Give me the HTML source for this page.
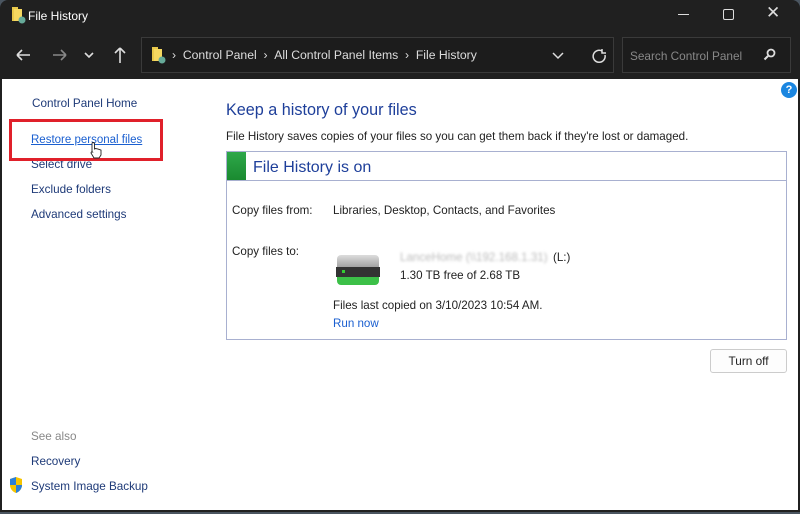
<!DOCTYPE html>
<html><head><style>
*{margin:0;padding:0;box-sizing:border-box}
body{width:800px;height:514px;background:#4a5560;font-family:"Liberation Sans",sans-serif;position:relative;overflow:hidden}
.win{position:absolute;left:0;top:0;width:800px;height:512px;background:#202020;border-radius:8px 8px 0 0;overflow:hidden}
.t{position:absolute;white-space:nowrap}
.content{position:absolute;left:2px;top:79px;width:796px;height:431px;background:#fff}
.lk{color:#1e3a78;font-size:11.7px}
.blk{color:#222;font-size:11.6px}
</style></head><body>
<div class="win">
<svg class="t" style="left:10px;top:6px" width="16" height="18"><path d="M2 1h6v14H2z" fill="#e8c84a"/><path d="M4 3h8v12H4z" fill="#f5d860"/><circle cx="12" cy="14" r="3.5" fill="#6a9"/></svg>
<div class="t" style="left:28px;top:9px;color:#fff;font-size:12px">File History</div>
<div class="t" style="left:678px;top:14px;width:11px;height:1px;background:#ddd"></div>
<div class="t" style="left:723px;top:9px;width:11px;height:11px;border:1.3px solid #ddd;border-radius:2px"></div>
<div class="t" style="left:766px;top:3px;color:#ddd;font-size:17px">✕</div>
<svg class="t" style="left:12px;top:45px" width="120" height="20" stroke="#ddd" stroke-width="1.6" fill="none"><path d="M5 10h13M5 10l5-5M5 10l5 5"/><path d="M41 10h13M54 10l-5-5M54 10l-5 5" stroke="#888"/><path d="M73 8l4 4 4-4"/><path d="M108 3v15M108 3l-5 5M108 3l5 5"/></svg>
<div class="t" style="left:141px;top:37px;width:473px;height:36px;border:1px solid #3a3a3a;background:#1c1c1c"></div>
<svg class="t" style="left:150px;top:46px" width="16" height="18"><path d="M2 1h6v14H2z" fill="#e8c84a"/><path d="M4 3h8v12H4z" fill="#f5d860"/><circle cx="12" cy="14" r="3.5" fill="#6a9"/></svg>
<div class="t" style="left:172px;top:48px;color:#ddd;font-size:12.2px">›&nbsp;&nbsp;Control Panel&nbsp;&nbsp;›&nbsp;&nbsp;All Control Panel Items&nbsp;&nbsp;›&nbsp;&nbsp;File History</div>
<svg class="t" style="left:550px;top:48px" width="60" height="16" stroke="#ddd" stroke-width="1.5" fill="none"><path d="M3 5l5 5 5-5"/><path d="M52 3a6 6 0 1 0 3 4M52 1v4h4"/></svg>
<div class="t" style="left:622px;top:37px;width:169px;height:36px;border:1px solid #3a3a3a;background:#1c1c1c"></div>
<div class="t" style="left:630px;top:49px;color:#888;font-size:11.8px">Search Control Panel</div>
<svg class="t" style="left:762px;top:46px" width="16" height="16"><circle cx="9" cy="7" r="3.5" stroke="#ddd" stroke-width="1.8" fill="none"/><path d="M6 10l-3.5 3.5" stroke="#ddd" stroke-width="2"/></svg>
<div class="content">
<div class="t" style="left:779px;top:3px;width:16px;height:16px;border-radius:50%;background:#1b86e0;color:#fff;font-size:11px;text-align:center;line-height:16px;font-weight:bold">?</div>
<div class="t lk" style="left:30px;top:18px">Control Panel Home</div>
<div class="t" style="left:29px;top:55px;font-size:11.5px;color:#1a5fd0;text-decoration:underline">Restore personal files</div>
<div class="t lk" style="left:29px;top:79px">Select drive</div>
<div class="t" style="left:7px;top:40px;width:154px;height:42px;border:3px solid #e0202a"></div>
<svg class="t" style="left:87px;top:62px" width="16" height="18"><path d="M4 1.5c1 0 1.5.5 1.5 1.5v5l1-.5 1.5.3 1 .3 1.5.5 1.5.5V14l-2 3H5l-3-5c0-1 1-1.5 1.5-1L3 11V3c0-1 0-1.5 1-1.5z" fill="#fff" stroke="#222" stroke-width="0.9"/></svg>
<div class="t lk" style="left:29px;top:104px">Exclude folders</div>
<div class="t lk" style="left:29px;top:129px">Advanced settings</div>
<div class="t" style="left:29px;top:351px;color:#888;font-size:11.7px">See also</div>
<div class="t lk" style="left:29px;top:376px">Recovery</div>
<svg class="t" style="left:6px;top:397px" width="16" height="18"><path d="M8 1l6 2v6c0 4-3 7-6 8-3-1-6-4-6-8V3z" fill="#f5c400"/><path d="M8 1v8H2V3zM8 9h6c0 4-3 7-6 8z" fill="#2a7fd8"/></svg>
<div class="t lk" style="left:29px;top:401px">System Image Backup</div>
<div class="t" style="left:224px;top:22px;color:#1e3f9a;font-size:16.2px">Keep a history of your files</div>
<div class="t blk" style="left:224px;top:51px">File History saves copies of your files so you can get them back if they're lost or damaged.</div>
<div class="t" style="left:224px;top:72px;width:561px;height:189px;border:1px solid #a8b0d0"></div>
<div class="t" style="left:225px;top:73px;width:19px;height:28px;background:linear-gradient(#2ea84a,#1a8a30)"></div>
<div class="t" style="left:225px;top:101px;width:559px;height:1px;background:#a8b0d0"></div>
<div class="t" style="left:251px;top:80px;color:#1e3f9a;font-size:16px">File History is on</div>
<div class="t blk" style="left:230px;top:125px">Copy files from:</div>
<div class="t blk" style="left:331px;top:125px">Libraries, Desktop, Contacts, and Favorites</div>
<div class="t blk" style="left:230px;top:166px">Copy files to:</div>
<div class="t" style="left:335px;top:176px;width:42px;height:14px;background:linear-gradient(#ddd,#999);border-radius:4px 4px 0 0"></div>
<div class="t" style="left:334px;top:188px;width:44px;height:10px;background:#333"></div>
<div class="t" style="left:340px;top:191px;width:3px;height:3px;background:#3c3"></div>
<div class="t" style="left:335px;top:198px;width:42px;height:8px;background:#3cc048;border-radius:0 0 4px 4px"></div>
<div class="t" style="left:398px;top:172px;color:#bbb;font-size:11.6px;filter:blur(1.2px)">LanceHome (\\192.168.1.31)</div>
<div class="t blk" style="left:551px;top:172px">(L:)</div>
<div class="t blk" style="left:398px;top:190px">1.30 TB free of 2.68 TB</div>
<div class="t blk" style="left:331px;top:220px">Files last copied on 3/10/2023 10:54 AM.</div>
<div class="t" style="left:331px;top:238px;color:#1a5fd0;font-size:11.6px">Run now</div>
<div class="t" style="left:708px;top:270px;width:77px;height:24px;border:1px solid #ccc;border-radius:3px;background:#fdfdfd;font-size:11.8px;color:#222;text-align:center;line-height:22px">Turn off</div>
</div>
</div>
</body></html>
